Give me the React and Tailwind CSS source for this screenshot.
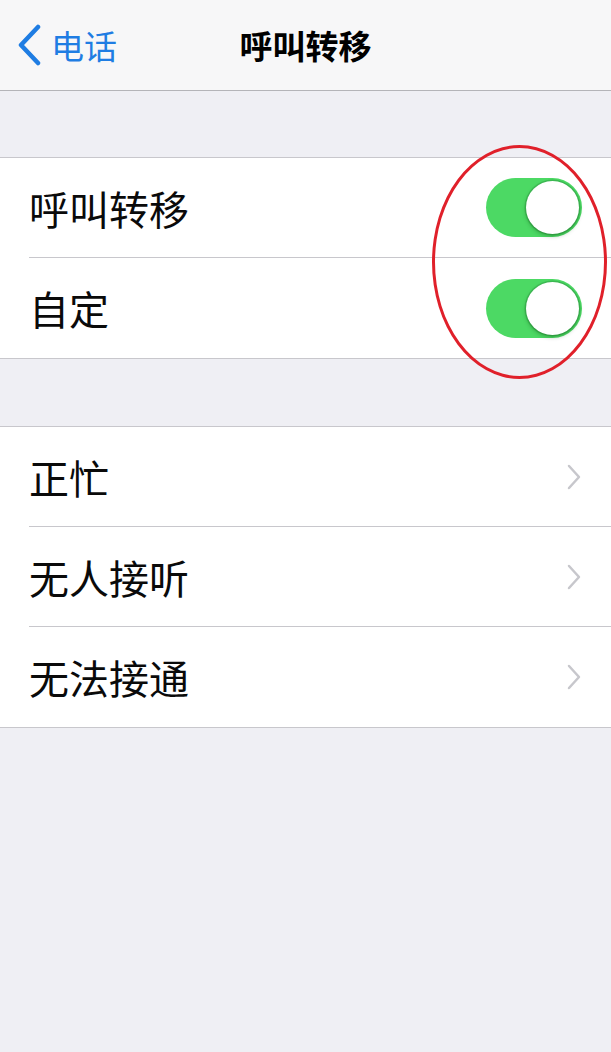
import React from "react";

function Toggle() {
  return (
    <div className="w-[96px] h-[59px] rounded-full bg-[#4cd964] flex items-center justify-end p-[3px]">
      <div className="w-[53px] h-[53px] rounded-full bg-white shadow-[0_2px_4px_rgba(0,60,0,0.35),0_0_0_1.5px_rgba(40,140,60,0.35)]" />
    </div>
  );
}

function Chevron() {
  return (
    <svg width="16" height="26" viewBox="0 0 16 26" fill="none">
      <polyline points="3,2 13,13 3,24" stroke="#c7c7cc" strokeWidth="2.5" strokeLinecap="round" strokeLinejoin="round" />
    </svg>
  );
}

function Row({ label, right, sep }) {
  return (
    <div className="h-[100px] pl-[29px] flex">
      <div className={"flex-1 flex items-center justify-between pr-[29px] " + (sep ? "border-b border-[#c8c7cc]" : "")}>
        <span className="text-[40px] leading-none text-[#0a0a0a]">{label}</span>
        {right}
      </div>
    </div>
  );
}

export default function App() {
  return (
    <div
      className="relative w-[611px] h-[1052px] bg-[#efeff4] overflow-hidden"
      style={{ fontFamily: '"Noto Sans CJK SC", "Noto Sans", sans-serif' }}
    >
      <div className="h-[91px] bg-[#f7f7f8] border-b border-[#b4b4b8] grid grid-cols-[1fr_auto_1fr] items-center">
        <div className="flex items-center pl-[16px] gap-[9px]">
          <svg width="26" height="42" viewBox="0 0 26 42" fill="none">
            <polyline points="22,3 5,21 22,39" stroke="#1f7de3" strokeWidth="4.5" strokeLinecap="round" strokeLinejoin="round" />
          </svg>
          <span className="text-[33px] leading-none text-[#1f7de3]">电话</span>
        </div>
        <div className="text-[33px] leading-none font-bold text-black">呼叫转移</div>
        <div />
      </div>

      <div className="h-[66px]" />

      <div className="bg-white border-y border-[#c8c7cc]">
        <Row label="呼叫转移" right={<Toggle />} sep />
        <Row label="自定" right={<Toggle />} />
      </div>

      <div className="h-[67px]" />

      <div className="bg-white border-y border-[#c8c7cc]">
        <Row label="正忙" right={<Chevron />} sep />
        <Row label="无人接听" right={<Chevron />} sep />
        <Row label="无法接通" right={<Chevron />} />
      </div>

      <div className="absolute left-[432px] top-[145px] w-[175px] h-[234px] rounded-[50%] border-[3.5px] border-[#e0202a]" />
    </div>
  );
}
